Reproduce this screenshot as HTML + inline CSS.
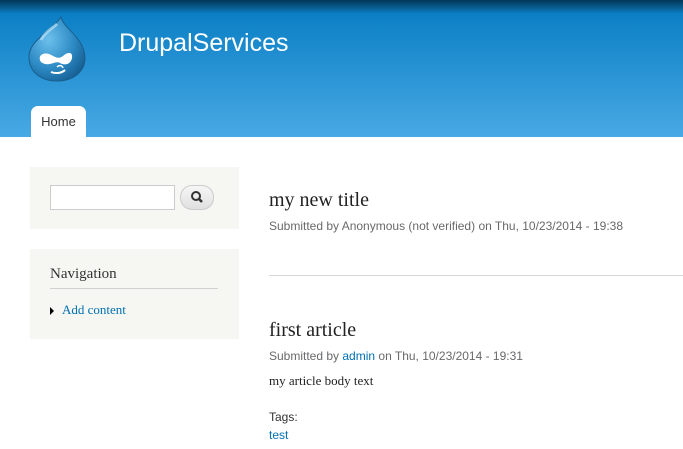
<!DOCTYPE html>
<html><head><meta charset="utf-8"><style>
*{margin:0;padding:0;box-sizing:border-box}
body{width:683px;height:449px;overflow:hidden;background:#fff;font-family:"Liberation Sans",sans-serif;position:relative}
#hdr{position:absolute;left:0;top:0;width:683px;height:137px;background:linear-gradient(#0779bf 0,#0f82c7 20px,#48a9e4 137px)}
#shadow{position:absolute;left:0;top:0;width:683px;height:14px;background:linear-gradient(rgba(0,0,0,.55),rgba(0,0,0,0))}
#site{position:absolute;left:119px;top:29px;color:#fff;font-size:25px}
#tab{position:absolute;left:31px;top:106px;width:55px;height:31px;background:#fff;border-radius:7px 7px 0 0;font-size:13px;color:#333;text-align:center;line-height:31px}
.blk{position:absolute;left:30px;width:209px;background:#f6f6f2}
.s{position:absolute;font-family:"Liberation Serif",serif}
.meta{position:absolute;left:269px;font-size:12px;color:#68696b}
.meta a{color:#0071b3;text-decoration:none}
</style></head><body>
<div id="hdr"><div id="shadow"></div>
<svg style="position:absolute;left:27px;top:16px" width="60" height="66" viewBox="0 0 60 66">
<defs><radialGradient id="g" cx="0.35" cy="0.35" r="0.75"><stop offset="0" stop-color="#6cc0ec"/><stop offset="0.6" stop-color="#2d8ac4"/><stop offset="1" stop-color="#155f93"/></radialGradient></defs>
<path d="M34 1 C36 12 58 22 58 42 C58 56 46 65 30 65 C14 65 2 56 2 41 C2 24 24 16 34 1Z" fill="url(#g)" stroke="#1a5f8c" stroke-width="1"/>
<path d="M14 46 C10 40 16 36 22 38 C27 40 31 44 36 40 C40 36 46 35 45 42 C44 48 38 50 33 47 C28 44 22 52 14 46Z" fill="#fff"/>
<path d="M24 56 C29 58 35 57 38 54" stroke="#fff" stroke-width="2" fill="none"/>
<path d="M30 51 C32 49 35 49 36 52" stroke="#fff" stroke-width="1.5" fill="none"/>
<path d="M14 24 C18 16 26 12 30 8" stroke="#b8e2f8" stroke-width="3" fill="none" opacity=".7"/>
</svg>
<div id="site">DrupalServices</div>
<div id="tab">Home</div>
</div>
<div class="blk" style="top:167px;height:62px">
<div style="position:absolute;left:20px;top:18px;width:125px;height:25px;background:#fff;border:1px solid #ccc"></div>
<div style="position:absolute;left:150px;top:18px;width:34px;height:25px;border:1px solid #ccc;border-radius:12px;background:linear-gradient(#f6f6f6,#e0e0e0)">
<svg width="34" height="25" viewBox="0 0 34 25" style="position:absolute;left:-1px;top:-1px"><circle cx="16" cy="11" r="4" fill="none" stroke="#333" stroke-width="2"/><path d="M19 14 L22 17" stroke="#333" stroke-width="2.5"/></svg></div>
</div>
<div class="blk" style="top:249px;height:90px">
<div class="s" style="left:20px;top:17px;font-size:15px;color:#333">Navigation</div>
<div style="position:absolute;left:20px;top:39px;width:168px;height:1px;background:#d0d0d0"></div>
<div style="position:absolute;left:20px;top:58px;width:0;height:0;border-left:4px solid #000;border-top:4px solid transparent;border-bottom:4px solid transparent"></div>
<div class="s" style="left:32px;top:53px;font-size:13px;color:#0071b3">Add content</div>
</div>
<div class="s" style="left:269px;top:189px;font-size:20px;color:#222">my new title</div>
<div class="meta" style="top:219px">Submitted by Anonymous (not verified) on Thu, 10/23/2014 - 19:38</div>
<div style="position:absolute;left:269px;top:275px;width:414px;height:1px;background:#d3d7d9"></div>
<div class="s" style="left:269px;top:319px;font-size:20px;color:#222">first article</div>
<div class="meta" style="top:349px">Submitted by <a>admin</a> on Thu, 10/23/2014 - 19:31</div>
<div class="s" style="left:269px;top:373px;font-size:13px;color:#222">my article body text</div>
<div class="meta" style="top:410px;color:#333">Tags:</div>
<div class="meta" style="top:428px"><a>test</a></div>
</body></html>
